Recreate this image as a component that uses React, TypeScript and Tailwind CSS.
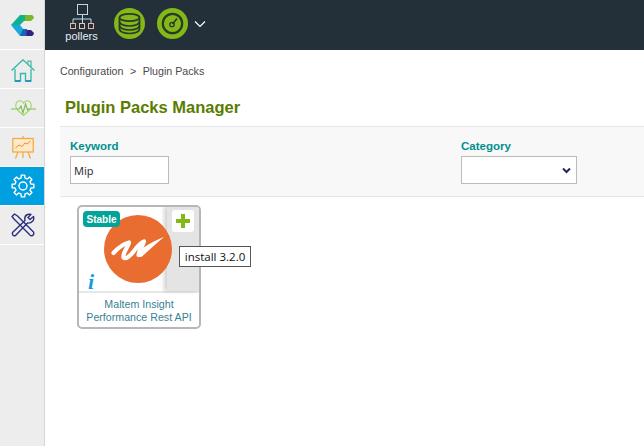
import React from "react";

const Sep = () => <div className="h-px bg-white" />;

function Logo() {
  return (
    <svg width="24" height="24" viewBox="0 0 24 24">
      <path d="M14 2 H22 Q24 3 24 5 L21 8 H14 Z" fill="#7ab82a" />
      <path d="M10 2 H15 V8 H14 L10 12 H1 Z" fill="#12b08c" />
      <path d="M1 12 H10 L14 17 V23 H10 Z" fill="#17a9e0" />
      <path d="M13 16 H17 V23 H10 Z" fill="#1f62b8" />
      <path d="M16.5 17 H21 L24 20 Q24 22 22 23 H16.5 Z" fill="#2f2580" />
    </svg>
  );
}

function Home() {
  return (
    <svg width="24" height="23" viewBox="0 0 24 23" fill="none" stroke="#2fb8ad" strokeWidth="1.3">
      <path d="M0.5 11.5 L12 0.8 L23.5 11.5" />
      <path d="M17 4.5 V2.2 H20 V8" stroke="#58b8a0" />
      <path d="M4 10 V22 H9.5 V14.5 H14.5 V22 H20 V10" />
      <path d="M4 22 H9.5 M14.5 22 H20" stroke="#1c86b8" strokeWidth="1.5" />
    </svg>
  );
}

function Heart() {
  return (
    <svg width="25" height="16" viewBox="0 0 25 16" fill="none" stroke="#a5d46c" strokeWidth="1.1">
      <path d="M12.5 15.5 L6.5 10 C3.5 6.5 4.5 1 9 0.8 C10.5 0.8 11.8 1.6 12.5 3 C13.2 1.6 14.5 0.8 16 0.8 C20.5 1 21.5 6.5 18.5 10 Z" />
      <path d="M0 9 H8 L10 6 L12 13 L14.5 4 L16.5 10 L17.5 9 H25" stroke="#7cbd4a" />
    </svg>
  );
}

function Board() {
  return (
    <svg width="22" height="23" viewBox="0 0 22 23" fill="none" stroke="#f5a53c" strokeWidth="1.2">
      <path d="M11 0 V2.5" />
      <rect x="0.8" y="2.5" width="20.4" height="13.5" fill="#fde9c9" />
      <path d="M3.5 12 L7 9 L10 10.5 L13 7 L15 8 L18.5 5" strokeWidth="1" stroke="#e8931f" />
      <path d="M11 16 V22 M6 16 L3.5 22.5 M16 16 L18.5 22.5" />
    </svg>
  );
}

function Gear() {
  const teeth = [0, 45, 90, 135, 180, 225, 270, 315];
  return (
    <svg width="24" height="24" viewBox="0 0 24 24" fill="none" stroke="#fff" strokeWidth="1.4">
      <circle cx="12" cy="12" r="4" />
      <path
        d={teeth
          .map((a) => {
            const p = (r: number, d: number) => {
              const t = ((a + d - 90) * Math.PI) / 180;
              return `${(12 + r * Math.cos(t)).toFixed(2)} ${(12 + r * Math.sin(t)).toFixed(2)}`;
            };
            return `${a === 0 ? "M" : "L"}${p(8.2, -14)} L${p(11, -9)} L${p(11, 9)} L${p(8.2, 14)}`;
          })
          .join(" ") + " Z"}
        strokeLinejoin="round"
      />
    </svg>
  );
}

function Tools() {
  return (
    <svg width="24" height="24" viewBox="0 0 24 24" fill="none" stroke="#2b2f7f" strokeWidth="1.4" strokeLinejoin="round">
      <path d="M1 3.5 L3.5 1 L6.5 3 L22.5 19 Q23.5 21.5 21.5 22.5 Q19.5 23.5 18.5 21.5 L3 6 Z" />
      <path d="M1.5 19.5 L14 7.5 Q13 3 16.5 1.5 Q18.5 0.8 20 1.3 L17 4.5 L19 6.5 L22.5 3.5 Q23.3 6 21.8 8 Q19.5 10.5 16.5 10 L4.5 22.5 Q1 23.5 1.5 19.5 Z" />
    </svg>
  );
}

function Pollers() {
  return (
    <svg width="24" height="25" viewBox="0 0 24 25" fill="none" strokeWidth="1">
      <rect x="7.5" y="0.5" width="10" height="10" stroke="#c9d3da" />
      <path d="M12.5 11 V15 M3 19 V15 H21 V19 M12.5 15 V19" stroke="#bcdcf0" />
      <rect x="0.5" y="19.5" width="5" height="5" stroke="#e9b4a8" />
      <rect x="9.5" y="19.5" width="5" height="5" stroke="#e9c4a8" />
      <rect x="18.5" y="19.5" width="5" height="5" stroke="#e9b4a8" />
    </svg>
  );
}

function Database() {
  return (
    <svg width="31" height="31" viewBox="0 0 31 31">
      <circle cx="15.5" cy="15.5" r="15.5" fill="#84b819" />
      <g fill="none" stroke="#2a3a2a" strokeWidth="1.7">
        <ellipse cx="15.5" cy="9.5" rx="10" ry="3.7" />
        <path d="M5.5 9.5 V21 C5.5 23.8 10 25.5 15.5 25.5 C21 25.5 25.5 23.8 25.5 21 V9.5" />
        <path d="M5.5 13.5 C5.5 16.3 10 18 15.5 18 C21 18 25.5 16.3 25.5 13.5" />
        <path d="M5.5 17.5 C5.5 20.3 10 22 15.5 22 C21 22 25.5 20.3 25.5 17.5" />
      </g>
    </svg>
  );
}

function Gauge() {
  return (
    <svg width="31" height="31" viewBox="0 0 31 31">
      <circle cx="15.5" cy="15.5" r="15.5" fill="#84b819" />
      <circle cx="15.5" cy="15.5" r="9.7" fill="none" stroke="#2a3a2a" strokeWidth="2.2" />
      <path d="M15.5 16 L20 10.5" stroke="#2a3a2a" strokeWidth="1.6" />
      <circle cx="15" cy="16.5" r="2.2" fill="none" stroke="#2a3a2a" strokeWidth="1.3" />
    </svg>
  );
}

function Brand() {
  return (
    <svg width="68" height="68" viewBox="0 0 68 68" className="block">
      <circle cx="34" cy="34" r="34" fill="#e96d30" />
      <path
        d="M9.5 38 C14 33 19 29 25 27.5 C25 31 18.5 37 19.5 42.5 C21.5 45 27 40 30 36 C33 32 36 28 40 26.5 C39 30 35 36 34.5 40"
        fill="none"
        stroke="#fff"
        strokeWidth="4.2"
        strokeLinecap="round"
        strokeLinejoin="round"
      />
      <path d="M33 38 C40 31 50 26 60 22 C53 28 45 35 38 41.5 C35 43 33 41 33 38 Z" fill="#fff" />
    </svg>
  );
}

function Card() {
  return (
    <div className="ml-[32px] mt-2 h-[124px] w-[124px] overflow-hidden rounded-[5px] border-2 border-[#b6b6bb] bg-white">
      <div className="relative h-[86px] border-b-2 border-[#e8e8e8]">
        <div className="absolute right-0 top-0 h-full w-[32px] bg-[#e4e4e4] shadow-[-3px_0_4px_rgba(0,0,0,0.18)]" />
        <div className="absolute left-[25px] top-[8px]">
          <Brand />
        </div>
        <div className="absolute left-[4px] top-[4px] h-[16px] rounded-[4px] bg-[#00a499] px-[3.5px] pt-[1px] text-[10px] font-bold leading-[15px] text-white">
          Stable
        </div>
        <div className="absolute right-[5px] top-[3px] flex h-[22px] w-[22px] items-center justify-center rounded-[3px] bg-white">
          <svg width="14" height="14" viewBox="0 0 14 14">
            <path d="M5 0 H9 V5 H14 V9 H9 V14 H5 V9 H0 V5 H5 Z" fill="#84b819" />
          </svg>
        </div>
        <span className="absolute left-[9px] top-[63px] font-['Liberation_Serif',serif] text-[22px] font-bold italic leading-[24px] text-[#0f9fe0]">
          i
        </span>
      </div>
      <div className="pt-[5px] text-center text-[10.67px] leading-[13px] text-[#3b7f96]">
        Maltem Insight
        <br />
        Performance Rest API
      </div>
    </div>
  );
}

export default function App() {
  return (
    <div className="relative flex h-[446px] w-[644px] overflow-hidden bg-white font-['Liberation_Sans',Arial,sans-serif]">
      <aside className="flex h-full w-[45px] flex-col border-r border-[#d6d6d6] bg-[#ededed]">
        <div className="flex h-[49px] items-center justify-center"><Logo /></div>
        <Sep />
        <div className="flex h-[38px] items-center justify-center pl-[2px] pt-[3px]"><Home /></div>
        <Sep />
        <div className="flex h-[38px] items-center justify-center pl-[2px]"><Heart /></div>
        <Sep />
        <div className="flex h-[38px] items-center justify-center pl-[2px]"><Board /></div>
        <Sep />
        <div className="flex h-[38px] items-center justify-center bg-[#009fdf] pl-[2px]"><Gear /></div>
        <Sep />
        <div className="flex h-[38px] items-center justify-center pl-[2px]"><Tools /></div>
        <Sep />
      </aside>
      <main className="flex min-w-0 flex-1 flex-col">
        <header className="flex h-[50px] items-start bg-[#232f39]">
          <div className="ml-5 flex w-[33px] flex-col items-center pt-1 text-[11px] leading-[13px] text-[#e8edf1]">
            <Pollers />
            <span className="mt-[1px]">pollers</span>
          </div>
          <div className="ml-4 mt-2"><Database /></div>
          <div className="ml-3 mt-2"><Gauge /></div>
          <svg width="12" height="8" viewBox="0 0 12 8" className="ml-[6px] mt-5" fill="none" stroke="#fff" strokeWidth="1.2">
            <path d="M1 1.5 L6 6.5 L11 1.5" />
          </svg>
        </header>
        <div className="ml-[15px] mt-[15px] flex gap-[6.5px] text-[10.67px] leading-[13px] text-[#4a4a4a]">
          <span>Configuration</span>
          <span>&gt;</span>
          <span>Plugin Packs</span>
        </div>
        <h1 className="ml-5 mt-[19px] text-[16.5px] font-bold leading-[20px] text-[#5a7d00]">Plugin Packs Manager</h1>
        <section className="ml-[15px] mt-[9px] flex h-[71px] gap-[292px] border-y border-[#e6e6e6] bg-[#f8f8f8] pl-[10px] pt-[12px]">
          <label className="flex flex-col">
            <span className="h-[17px] text-[11.5px] font-bold leading-[15px] text-[#00918f]">Keyword</span>
            <input
              readOnly
              value="Mip"
              className="h-[28px] w-[99px] border border-[#bbbbbb] bg-white px-[3px] font-['Noto_Sans',sans-serif] text-[11px] text-[#333333] outline-none"
            />
          </label>
          <label className="flex flex-col">
            <span className="h-[17px] text-[11.5px] font-bold leading-[15px] text-[#00918f]">Category</span>
            <div className="flex h-[28px] w-[116px] items-center justify-end border border-[#bbbbbb] bg-white pr-[5px]">
              <svg width="9" height="7" viewBox="0 0 9 7" fill="none" stroke="#1d2c55" strokeWidth="2">
                <path d="M1 1.5 L4.5 5 L8 1.5" />
              </svg>
            </div>
          </label>
        </section>
        <Card />
      </main>
      <div className="absolute left-[179px] top-[246px] flex h-[21px] w-[72px] items-center justify-center border border-[#555555] bg-white font-['Open_Sans',sans-serif] text-[11.5px] text-[#111111]">
        install 3.2.0
      </div>
    </div>
  );
}
